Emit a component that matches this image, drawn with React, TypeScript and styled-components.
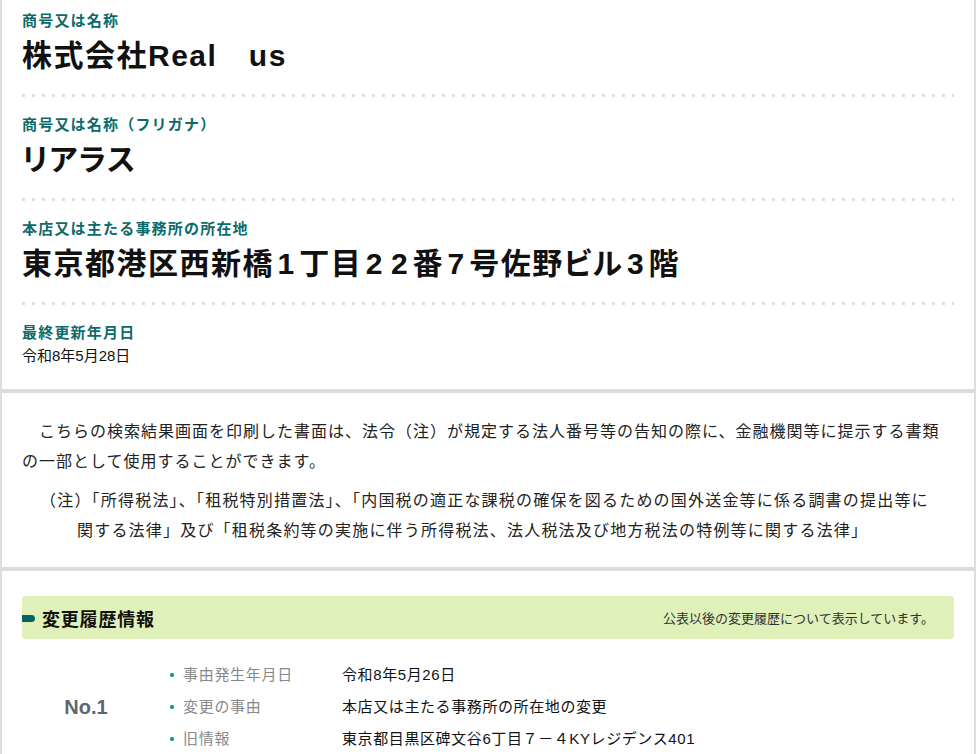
import React from "react";
import styled, { createGlobalStyle } from "styled-components";

const GlobalStyle = createGlobalStyle`
  body {
    margin: 0;
    background: #dddddd;
    font-family: "Liberation Sans", "Noto Sans CJK JP", sans-serif;
    color: #222;
  }
`;

interface HistoryRow {
  term: string;
  desc: string;
}

const rows: HistoryRow[] = [
  { term: "事由発生年月日", desc: "令和8年5月26日" },
  { term: "変更の事由", desc: "本店又は主たる事務所の所在地の変更" },
  { term: "旧情報", desc: "東京都目黒区碑文谷6丁目７－４KYレジデンス401" },
];

const App = () => {
  return (
    <>
      <GlobalStyle />
      <Page>
        <Panel $pad="0 20px">
          <Field $first>
            <Label>商号又は名称</Label>
            <Value>株式会社Real　us</Value>
          </Field>
          <Field>
            <Label>商号又は名称（フリガナ）</Label>
            <Value>リアラス</Value>
          </Field>
          <Field>
            <Label>本店又は主たる事務所の所在地</Label>
            <Value>
              東京都港区西新橋<Num>1</Num>丁目<Num>2</Num>
              <Num>2</Num>番<Num>7</Num>号佐野ビル<Num>3</Num>階
            </Value>
          </Field>
          <Field $last>
            <Label>最終更新年月日</Label>
            <Plain>令和8年5月28日</Plain>
          </Field>
        </Panel>

        <Panel $pad="24px 20px 21px">
          <Para>
            {"\u3000"}
            こちらの検索結果画面を印刷した書面は、法令（注）が規定する法人番号等の告知の際に、金融機関等に提示する書類
            <br />
            の一部として使用することができます。
          </Para>
          <Note>
            （注）「所得税法」、「租税特別措置法」、「内国税の適正な課税の確保を図るための国外送金等に係る調書の提出等に
            <br />
            関する法律」及び「租税条約等の実施に伴う所得税法、法人税法及び地方税法の特例等に関する法律」
          </Note>
        </Panel>

        <Panel $pad="25px 20px 40px">
          <Bar>
            <BarTitle>変更履歴情報</BarTitle>
            <BarCaption>公表以後の変更履歴について表示しています。</BarCaption>
          </Bar>
          <Entry>
            <EntryNo>No.1</EntryNo>
            <Rows>
              {rows.map((r) => (
                <React.Fragment key={r.term}>
                  <Term>{r.term}</Term>
                  <Desc>{r.desc}</Desc>
                </React.Fragment>
              ))}
            </Rows>
          </Entry>
        </Panel>
      </Page>
    </>
  );
};

export default App;

const Page = styled.div`
  display: flex;
  flex-direction: column;
  gap: 4px;
  padding: 0 2px;
`;

const Panel = styled.section<{ $pad: string }>`
  background: #fff;
  padding: ${(p) => p.$pad};
`;

const Field = styled.div<{ $first?: boolean; $last?: boolean }>`
  display: flex;
  flex-direction: column;
  padding: ${(p) => (p.$first ? 11 : 18)}px 0 ${(p) => (p.$last ? 22 : 21)}px;
  background: ${(p) =>
    p.$last
      ? "none"
      : "linear-gradient(to right, #e0e0e0 3px, transparent 3px) left bottom / 10px 3px repeat-x"};
`;

const Label = styled.div`
  font-size: 15px;
  line-height: 20px;
  font-weight: bold;
  letter-spacing: 1.2px;
  color: #0b6b6b;
`;

const Value = styled.div`
  margin-top: 5px;
  font-size: 30px;
  line-height: 40px;
  font-weight: bold;
  letter-spacing: 1.5px;
  color: #111;
  font-feature-settings: "palt";
`;

const Num = styled.span`
  margin: 0 3.5px;
`;

const Plain = styled.div`
  margin-top: 2px;
  font-size: 15px;
  line-height: 22px;
  color: #111;
`;

const Para = styled.p`
  margin: 0;
  font-size: 16px;
  line-height: 30px;
  letter-spacing: 1px;
  color: #222;
`;

const Note = styled(Para)`
  margin-top: 9px;
  padding-left: 55px;
  text-indent: -37px;
  letter-spacing: 1.2px;
`;

const Bar = styled.div`
  position: relative;
  display: flex;
  align-items: center;
  justify-content: space-between;
  height: 43px;
  padding: 0 20px;
  background: #e0f0b9;
  border-radius: 4px;

  &::before {
    content: "";
    position: absolute;
    left: 0;
    top: 50%;
    width: 13px;
    height: 7px;
    margin-top: -3px;
    background: #006666;
    border-radius: 0 4px 4px 0;
  }
`;

const BarTitle = styled.h2`
  margin: 0;
  font-size: 18px;
  font-weight: bold;
  letter-spacing: 0.8px;
  color: #111;
`;

const BarCaption = styled.span`
  font-size: 13px;
  color: #333;
`;

const Entry = styled.div`
  display: flex;
  align-items: center;
  gap: 20px;
  margin-top: 20px;
`;

const EntryNo = styled.div`
  width: 128px;
  text-align: center;
  font-size: 20px;
  font-weight: bold;
  color: #5c6670;
`;

const Rows = styled.dl`
  display: grid;
  grid-template-columns: 172px 1fr;
  margin: 0;
`;

const Term = styled.dt`
  display: flex;
  align-items: center;
  line-height: 32px;
  font-size: 15px;
  letter-spacing: 0.7px;
  color: #888;

  &::before {
    content: "";
    width: 4px;
    height: 4px;
    margin-right: 9px;
    border-radius: 50%;
    background: #009a5a;
  }
`;

const Desc = styled.dd`
  margin: 0;
  line-height: 32px;
  font-size: 15px;
  letter-spacing: 0.6px;
  color: #111;
`;
